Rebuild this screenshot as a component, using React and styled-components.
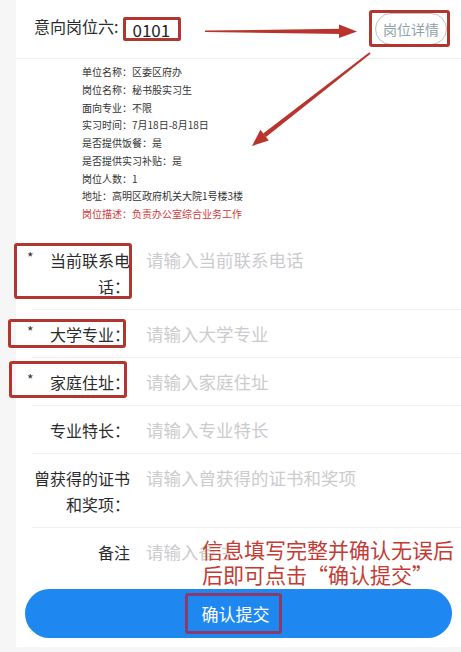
import React from "react";
import styled, { createGlobalStyle } from "styled-components";

const GlobalStyle = createGlobalStyle`
  body {
    margin: 0;
    background: #f6f6f6;
    font-family: "Noto Sans CJK SC", "Noto Sans", sans-serif;
    color: #323233;
  }
`;

const Page = styled.div`
  position: relative;
  padding: 0 0 5px 16px;
`;

const Card = styled.div`
  background: #fff;
  padding-bottom: 9px;
`;

const TopRow = styled.div`
  display: flex;
  align-items: center;
  height: 58px;
  padding: 0 14px 0 18px;
  border-bottom: 1px solid #f0f0f0;
`;

const TopLabel = styled.span`
  font-size: 16px;
  line-height: 20px;
  margin-top: -6px;
  color: #2b2b2b;
`;

const ValueBox = styled.span`
  display: flex;
  align-items: center;
  box-sizing: border-box;
  width: 58px;
  height: 24px;
  margin-left: 5px;
  padding-left: 6px;
  border: 3px solid #b3352f;
  border-radius: 2px;
  font-size: 17px;
  color: #222;
`;

const DetailButton = styled.button`
  position: relative;
  margin-left: auto;
  width: 72px;
  height: 32px;
  border: 1px solid #bcc3c6;
  border-radius: 16px;
  background: #fff;
  color: #8fa2aa;
  font-family: inherit;
  font-size: 14px;
  padding: 0;
`;

const Frame = styled.span`
  position: absolute;
  top: ${(p) => p.$box[0]}px;
  right: ${(p) => p.$box[1]}px;
  bottom: ${(p) => p.$box[2]}px;
  left: ${(p) => p.$box[3]}px;
  border: 3px solid ${(p) => p.$color || "#b3352f"};
  border-radius: 3px;
  pointer-events: none;
`;

const Details = styled.div`
  padding: 4px 0 13px 66px;
  font-size: 10px;
  line-height: 17.75px;
  color: #333;
`;

const DetailLine = styled.div`
  color: ${(p) => (p.$alert ? "#d2393c" : "#333")};
`;

const Field = styled.div`
  position: relative;
  display: flex;
  padding: 11px 16px 11px 11px;
  line-height: 26px;

  &:not(:last-of-type)::after {
    content: "";
    position: absolute;
    left: 16px;
    right: 0;
    bottom: 0;
    border-bottom: 1px solid #f1f1f1;
  }
`;

const LabelCell = styled.div`
  position: relative;
  display: flex;
  flex: 0 0 103px;
  margin-right: 16px;
  font-size: 16px;
  color: #2b2b2b;
`;

const Star = styled.span`
  flex: 0 0 22px;
  padding-left: 0;
  margin-top: -3px;
  font-size: 14px;
  color: #333;
`;

const LabelText = styled.span`
  flex: 1;
  text-align: right;
  word-break: break-all;
`;

const Placeholder = styled.span`
  flex: 1;
  font-size: 17.5px;
  color: #cbcbce;
  white-space: nowrap;
`;

const Note = styled.div`
  position: absolute;
  left: 186px;
  top: 9px;
  font-size: 21px;
  line-height: 25px;
  color: #c33b32;
  white-space: nowrap;
  text-shadow: 0 0 2px #fff;
`;

const SubmitButton = styled.button`
  display: flex;
  align-items: center;
  justify-content: center;
  width: calc(100% - 18px);
  height: 49px;
  margin: 13px 9px 0;
  border: none;
  border-radius: 25px;
  background: #1f88f0;
  color: #fff;
  font-family: inherit;
  font-size: 17px;
`;

const ButtonText = styled.span`
  position: relative;
  margin-right: 6px;
`;

const Overlay = styled.svg`
  position: absolute;
  left: 0;
  top: 0;
  pointer-events: none;
`;

const details = [
  "单位名称：区委区府办",
  "岗位名称：秘书股实习生",
  "面向专业：不限",
  "实习时间：7月18日-8月18日",
  "是否提供饭餐：是",
  "是否提供实习补贴：是",
  "岗位人数：1",
  "地址：高明区政府机关大院1号楼3楼",
];

const fields = [
  { label: "当前联系电话：", ph: "请输入当前联系电话", required: true, box: [-4, -2, 0, -13] },
  { label: "大学专业：", ph: "请输入大学专业", required: true, box: [-2, 4, -1, -19] },
  { label: "家庭住址：", ph: "请输入家庭住址", required: true, box: [-8, 3, -3, -18] },
  { label: "专业特长：", ph: "请输入专业特长" },
  { label: "曾获得的证书和奖项：", ph: "请输入曾获得的证书和奖项" },
];

export default function App() {
  return (
    <Page>
      <GlobalStyle />
      <Card>
        <TopRow>
          <TopLabel>意向岗位六:</TopLabel>
          <ValueBox>0101</ValueBox>
          <DetailButton>
            岗位详情
            <Frame $box={[-4, -4, -3, -7]} />
          </DetailButton>
        </TopRow>
        <Details>
          {details.map((d) => (
            <DetailLine key={d}>{d}</DetailLine>
          ))}
          <DetailLine $alert>岗位描述：负责办公室综合业务工作</DetailLine>
        </Details>
        <div>
          {fields.map((f) => (
            <Field key={f.label}>
              <LabelCell>
                {f.required && <Star>*</Star>}
                <LabelText>{f.label}</LabelText>
                {f.box && <Frame $box={f.box} />}
              </LabelCell>
              <Placeholder>{f.ph}</Placeholder>
            </Field>
          ))}
          <Field>
            <LabelCell>
              <LabelText>备注</LabelText>
            </LabelCell>
            <Placeholder>请输入备注</Placeholder>
            <Note>
              信息填写完整并确认无误后
              <br />
              后即可点击“确认提交”
            </Note>
          </Field>
        </div>
        <SubmitButton>
          <ButtonText>
            确认提交
            <Frame $box={[-8, -12, -8, -17]} $color="#8a3b6c" />
          </ButtonText>
        </SubmitButton>
      </Card>
      <Overlay width="461" height="652" viewBox="0 0 461 652">
        <g fill="#b9342d">
          <polygon points="205,30.6 342,28.8 342,34 205,32" />
          <polygon points="339,24.5 357,31.4 339,38" />
          <polygon points="369.4,52.2 370.6,53.8 266,137 263.2,133.4" />
          <polygon points="252,146 268.8,140.4 260.4,129.8" />
        </g>
      </Overlay>
    </Page>
  );
}
